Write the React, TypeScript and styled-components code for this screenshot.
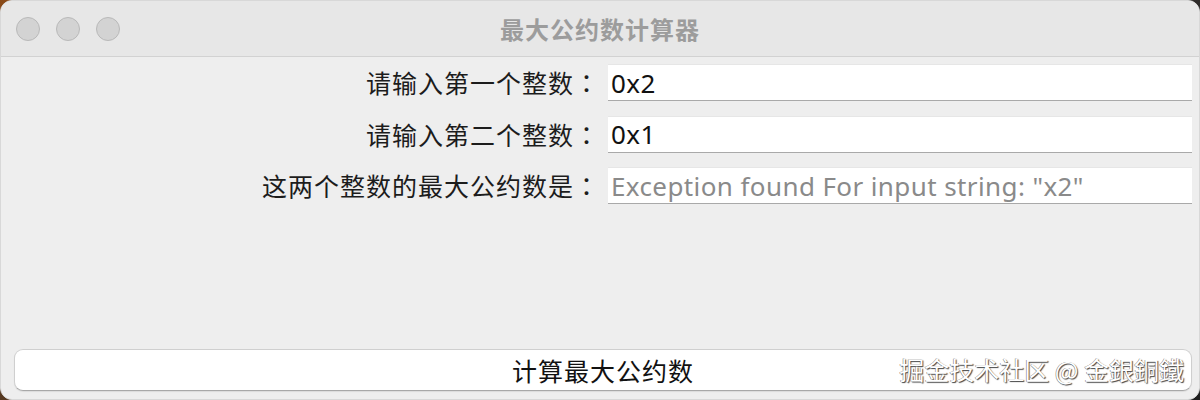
import React from "react";
import styled, { createGlobalStyle } from "styled-components";

const Global = createGlobalStyle`
  html, body { margin: 0; padding: 0; }
  body {
    width: 1200px;
    height: 400px;
    overflow: hidden;
    background: linear-gradient(135deg, #8a4a18 0%, #5a3a20 20%, #2a2a2a 80%, #1e1e1e 100%);
  }
`;

const Window = styled.div`
  position: relative;
  width: 1200px;
  height: 400px;
  box-sizing: border-box;
  border-radius: 12px;
  overflow: hidden;
  background: #eeeeee;
  display: flex;
  flex-direction: column;
  border: 1px solid #d8d8d8;
`;

const TitleBar = styled.div`
  flex: 0 0 auto;
  height: 55px;
  display: flex;
  align-items: center;
  position: relative;
  background: #e7e7e7;
  border-bottom: 1px solid #d2d2d2;
`;

const Lights = styled.div`
  display: flex;
  gap: 16px;
  padding-left: 15px;
`;

const Light = styled.span`
  width: 24px;
  height: 24px;
  border-radius: 50%;
  background: #d3d3d3;
  border: 1px solid #b9b9b9;
  box-sizing: border-box;
`;

const Title = styled.div`
  position: absolute;
  inset: 0;
  display: flex;
  align-items: center;
  justify-content: center;
  font-family: "Noto Sans CJK SC", sans-serif;
  font-weight: 700;
  font-size: 24px;
  letter-spacing: 1px;
  color: #9c9c9c;
  pointer-events: none;
`;

const Content = styled.div`
  flex: 1;
  display: flex;
  flex-direction: column;
  justify-content: space-between;
  padding: 7px 7px 8px 13px;
`;

const Form = styled.div`
  display: grid;
  grid-template-columns: 1fr 584px;
  column-gap: 8px;
  row-gap: 14.5px;
  align-items: center;
`;

const Label = styled.div`
  text-align: right;
  font-family: "Noto Sans CJK SC", sans-serif;
  font-size: 25px;
  letter-spacing: 1px;
  color: #1c1c1c;
  line-height: 37px;
  white-space: nowrap;
`;

const Colon = styled.span`
  font-family: "Noto Sans CJK JP", "Noto Sans CJK SC", sans-serif;
`;

const Field = styled.div<{ $muted?: boolean }>`
  height: 37px;
  box-sizing: border-box;
  background: #ffffff;
  border-top: 1px solid #e6e6e6;
  border-bottom: 1px solid #a9a9a9;
  padding: 0 3px;
  display: flex;
  align-items: center;
  font-family: "Noto Sans", "Noto Sans CJK SC", sans-serif;
  font-size: 26px;
  letter-spacing: 0.4px;
  color: ${(p) => (p.$muted ? "#8a8a8a" : "#111111")};
  white-space: nowrap;
  overflow: hidden;
`;

const Button = styled.button`
  height: 42px;
  width: 100%;
  box-sizing: border-box;
  background: #ffffff;
  border: 1px solid #cfcfcf;
  border-bottom-color: #a8a8a8;
  border-radius: 9px;
  box-shadow: 0 1px 1px rgba(0, 0, 0, 0.08);
  font-family: "Noto Sans CJK SC", sans-serif;
  font-size: 25px;
  letter-spacing: 1px;
  color: #111111;
  padding: 0;
  cursor: default;
`;

const Watermark = styled.div`
  position: absolute;
  right: 15px;
  bottom: 12px;
  font-family: "Noto Sans CJK TC", "Noto Sans CJK SC", sans-serif;
  font-size: 25px;
  color: #ffffff;
  text-shadow: 1px 1px 1px #444, -0.5px -0.5px 0 #777;
  white-space: nowrap;
`;

const rows: { label: string; value: string; muted?: boolean }[] = [
  { label: "请输入第一个整数", value: "0x2" },
  { label: "请输入第二个整数", value: "0x1" },
  { label: "这两个整数的最大公约数是", value: 'Exception found For input string: "x2"', muted: true },
];

export default function App() {
  return (
    <>
      <Global />
      <Window>
        <TitleBar>
          <Lights>
            <Light />
            <Light />
            <Light />
          </Lights>
          <Title>最大公约数计算器</Title>
        </TitleBar>
        <Content>
          <Form>
            {rows.map((r) => (
              <React.Fragment key={r.label}>
                <Label>
                  {r.label}
                  <Colon>：</Colon>
                </Label>
                <Field $muted={r.muted}>{r.value}</Field>
              </React.Fragment>
            ))}
          </Form>
          <Button>计算最大公约数</Button>
        </Content>
        <Watermark>掘金技术社区 @ 金銀銅鐵</Watermark>
      </Window>
    </>
  );
}
